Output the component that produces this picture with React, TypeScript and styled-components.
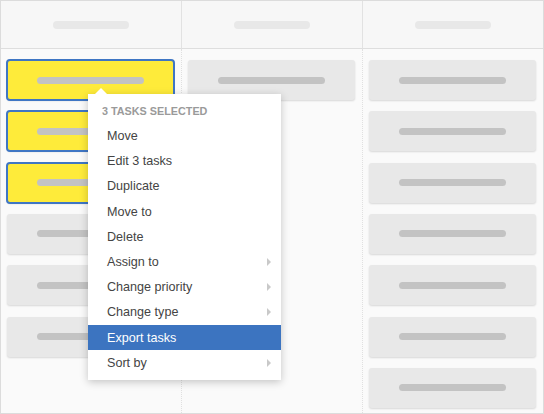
import React from 'react';
import styled, { createGlobalStyle } from 'styled-components';

/* ------------------------------- Data ------------------------------- */
const columns = [
  { selected: 3, cards: 6 },
  { selected: 0, cards: 1 },
  { selected: 0, cards: 7 },
];

const menuItems = [
  { label: 'Move' },
  { label: 'Edit 3 tasks' },
  { label: 'Duplicate' },
  { label: 'Move to' },
  { label: 'Delete' },
  { label: 'Assign to', sub: true },
  { label: 'Change priority', sub: true },
  { label: 'Change type', sub: true },
  { label: 'Export tasks', active: true },
  { label: 'Sort by', sub: true },
];

const Global = createGlobalStyle`
  html, body {
    margin: 0;
    padding: 0;
    background: #fff;
  }
  body {
    font-family: "Liberation Sans", Arial, sans-serif;
  }
`;

const App = () => {
  return (
    <>
      <Global />
      <Board>
        {columns.map((col, i) => (
          <HeaderCell key={`h${i}`} last={i === columns.length - 1}>
            <Pill />
          </HeaderCell>
        ))}
        {columns.map((col, i) => (
          <Column key={`c${i}`} last={i === columns.length - 1}>
            {Array.from({ length: col.cards }).map((_, j) => (
              <Card key={j} selected={j < col.selected}>
                <Bar />
              </Card>
            ))}
          </Column>
        ))}

        <Menu>
          <MenuTitle>3 Tasks selected</MenuTitle>
          {menuItems.map((item) => (
            <MenuItem key={item.label} active={!!item.active}>
              {item.label}
              {item.sub && <SubArrow />}
            </MenuItem>
          ))}
        </Menu>
      </Board>
    </>
  );
};

/* ------------------------------ Styles ------------------------------ */
const Board = styled.div`
  position: relative;
  width: 544px;
  height: 414px;
  box-sizing: border-box;
  border: 1px solid #dcdcdc;
  display: grid;
  grid-template-columns: 181px 181px 180px;
  grid-template-rows: 48px 1fr;
  overflow: hidden;
  background: #fafafa;
`;

const HeaderCell = styled.div<{ last?: boolean }>`
  background: #f7f7f7;
  border-bottom: 1px solid #dedede;
  border-right: ${(p) => (p.last ? 'none' : '1px solid #e2e2e2')};
  display: flex;
  align-items: center;
  justify-content: center;
`;

const Pill = styled.div`
  width: 76px;
  height: 8px;
  border-radius: 4px;
  background: #e8e8e8;
`;

const Column = styled.div<{ last?: boolean }>`
  display: flex;
  flex-direction: column;
  gap: 11.33px;
  padding: 11px 7px 0 6px;
  border-right: ${(p) => (p.last ? 'none' : '1px dotted #e0e0e0')};
  min-height: 0;
`;

const Card = styled.div<{ selected?: boolean }>`
  flex: 0 0 40px;
  height: 40px;
  border-radius: 3px;
  background: ${(p) => (p.selected ? '#feeb3a' : '#e8e8e8')};
  box-shadow: 0 1px 2px rgba(0, 0, 0, 0.14);
  outline: ${(p) => (p.selected ? '2px solid #3f76c4' : 'none')};
  outline-offset: -1px;
  display: flex;
  align-items: center;
  justify-content: center;
`;

const Bar = styled.div`
  width: 107px;
  height: 7px;
  border-radius: 4px;
  background: #c3c3c3;
`;

const Menu = styled.div`
  position: absolute;
  left: 87px;
  top: 93px;
  width: 193px;
  padding-bottom: 4.5px;
  background: #fff;
  box-shadow: 0 2px 8px rgba(0, 0, 0, 0.22);
  z-index: 10;

  &:before {
    content: '';
    position: absolute;
    top: -6px;
    left: 7px;
    border-left: 6px solid transparent;
    border-right: 6px solid transparent;
    border-bottom: 6px solid #fff;
  }
`;

const MenuTitle = styled.div`
  padding: 10.5px 14px 6px;
  font-size: 10.8px;
  line-height: 13px;
  font-weight: 700;
  text-transform: uppercase;
  color: #9a9a9a;
`;

const MenuItem = styled.div<{ active?: boolean }>`
  position: relative;
  height: 25.2px;
  display: flex;
  align-items: center;
  justify-content: space-between;
  padding: 0 10px 0 19px;
  font-size: 12.6px;
  color: ${(p) => (p.active ? '#fff' : '#444')};
  background: ${(p) => (p.active ? '#3c74c0' : 'transparent')};
`;

const SubArrow = styled.span`
  width: 0;
  height: 0;
  border-top: 4px solid transparent;
  border-bottom: 4px solid transparent;
  border-left: 4px solid #c9c9c9;
`;

export default App;
